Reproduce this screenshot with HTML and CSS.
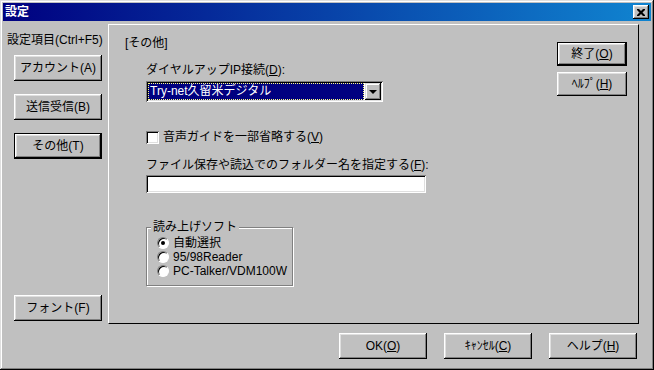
FILE: index.html
```html
<!DOCTYPE html>
<html lang="ja">
<head>
  <meta charset="UTF-8">
  <title>設定</title>
  <link rel="stylesheet" href="styles.css">
</head>
<body>

<div class="window">
  <div class="titlebar">
    <span class="title">設定</span>
    <button class="close-btn" aria-label="閉じる">
      <svg width="8" height="7" viewBox="0 0 8 7"><path d="M0 0h2l2 2 2-2h2v1l-2.5 2.5L8 6v1H6L4 5 2 7H0V6l2.5-2.5L0 1z" fill="#000"/></svg>
    </button>
  </div>

  <div class="main">
    <!-- left: category list -->
    <div class="sidebar">
      <div class="side-label">設定項目(Ctrl+F5)</div>
      <button class="btn side-btn">アカウント(A)</button>
      <button class="btn side-btn">送信受信(B)</button>
      <button class="btn side-btn default">その他(T)</button>
      <button class="btn side-btn font-btn">フォント(F)</button>
    </div>

    <!-- right: page -->
    <div class="panel">
      <div class="panel-body">
        <div class="section-title">[その他]</div>
        <div class="fields">
          <div class="field-label first">ダイヤルアップIP接続(<u>D</u>):</div>
          <div class="combo">
            <div class="combo-value"><span>Try-net久留米デジタル</span></div>
            <div class="combo-arrow"><i></i></div>
          </div>

          <label class="check-row">
            <span class="checkbox"></span>
            <span>音声ガイドを一部省略する(<u>V</u>)</span>
          </label>

          <div class="field-label">ファイル保存や読込でのフォルダー名を指定する(<u>F</u>):</div>
          <div class="textbox"></div>

          <fieldset class="group">
            <legend>読み上げソフト</legend>
            <label class="radio-row"><span class="radio checked"></span>自動選択</label>
            <label class="radio-row"><span class="radio"></span>95/98Reader</label>
            <label class="radio-row"><span class="radio"></span>PC-Talker/VDM100W</label>
          </fieldset>
        </div>
      </div>

      <div class="panel-actions">
        <button class="btn small-btn default">終了(<u>O</u>)</button>
        <button class="btn small-btn">ﾍﾙﾌﾟ(<u>H</u>)</button>
      </div>
    </div>
  </div>

  <div class="footer">
    <button class="btn foot-btn">OK(<u>O</u>)</button>
    <button class="btn foot-btn">ｷｬﾝｾﾙ(<u>C</u>)</button>
    <button class="btn foot-btn">ヘルプ(<u>H</u>)</button>
  </div>
</div>

</body>
</html>
```

FILE: styles.css
```css
* {
  box-sizing: border-box;
}

body {
  margin: 0;
  font-family: "Liberation Sans", "Noto Sans CJK JP", sans-serif;
  font-size: 12px;
  line-height: 14px;
  color: #000;
  background: #c0c0c0;
}

u {
  text-decoration: underline;
  text-underline-offset: 1px;
}

.window {
  width: 654px;
  height: 370px;
  padding: 3px;
  background: #c0c0c0;
  box-shadow: inset -1px -1px #000, inset 1px 1px #dfdfdf,
              inset -2px -2px #808080, inset 2px 2px #fff;
  display: flex;
  flex-direction: column;
}

.titlebar {
  height: 18px;
  display: flex;
  align-items: center;
  justify-content: space-between;
  padding: 0 2px 0 2px;
  background: linear-gradient(to right, #000080, #1084d0);
}

.title {
  color: #fff;
  font-weight: bold;
}

.close-btn {
  width: 16px;
  height: 14px;
  padding: 0;
  border: none;
  background: #c0c0c0;
  display: flex;
  align-items: center;
  justify-content: center;
  box-shadow: inset -1px -1px #000, inset 1px 1px #fff,
              inset -2px -2px #808080, inset 2px 2px #dfdfdf;
}

/* buttons */
.btn {
  font: inherit;
  color: #000;
  background: #c0c0c0;
  border: none;
  padding: 0;
  box-shadow: inset -1px -1px #000, inset 1px 1px #fff,
              inset -2px -2px #808080, inset 2px 2px #dfdfdf;
}

.btn.default {
  border: 1px solid #000;
}

.main {
  display: flex;
  padding-top: 3px;
}

.sidebar {
  width: 105px;
  height: 300px;
  display: flex;
  flex-direction: column;
  padding: 9px 0 3px 4px;
}

.side-label {
  margin-bottom: 8px;
}

.side-btn {
  width: 88px;
  height: 26px;
  margin: 0 0 13px 7px;
}

.font-btn {
  margin-top: auto;
  margin-bottom: 0;
}

.panel {
  width: 531px;
  height: 300px;
  display: flex;
  border-top: 1px solid #fff;
  border-left: 1px solid #fff;
  border-right: 1px solid #000;
  border-bottom: 1px solid #000;
  padding: 11px 11px 0 16px;
}

.panel-body {
  flex: 1;
}

.fields {
  margin-left: 21px;
}

.field-label {
  margin-top: 14px;
}

.field-label.first {
  margin-top: 13px;
}

.combo {
  width: 237px;
  height: 21px;
  margin-top: 4px;
  display: flex;
  padding: 2px;
  background: #fff;
  box-shadow: inset 1px 1px #808080, inset -1px -1px #fff,
              inset 2px 2px #000, inset -2px -2px #dfdfdf;
}

.combo-value {
  flex: 1;
  margin-right: 1px;
  background: #000080;
  color: #fff;
  border: 1px dotted #ffff80;
  line-height: 14px;
  padding-left: 1px;
}

.combo-arrow {
  width: 16px;
  height: 17px;
  background: #c0c0c0;
  display: flex;
  align-items: center;
  justify-content: center;
  box-shadow: inset -1px -1px #000, inset 1px 1px #dfdfdf,
              inset -2px -2px #808080, inset 2px 2px #fff;
}

.combo-arrow i {
  width: 0;
  height: 0;
  border-left: 4px solid transparent;
  border-right: 4px solid transparent;
  border-top: 4px solid #000;
  margin-top: 1px;
}

.check-row {
  display: flex;
  align-items: center;
  gap: 4px;
  margin-top: 28px;
  height: 14px;
}

.checkbox {
  width: 13px;
  height: 13px;
  background: #fff;
  box-shadow: inset 1px 1px #808080, inset -1px -1px #fff,
              inset 2px 2px #000, inset -2px -2px #dfdfdf;
}

.textbox {
  width: 280px;
  height: 18px;
  margin-top: 3px;
  background: #fff;
  box-shadow: inset 1px 1px #808080, inset -1px -1px #fff,
              inset 2px 2px #000, inset -2px -2px #dfdfdf;
}

.group {
  width: 147px;
  margin: 27px 0 0;
  padding: 0 0 7px 4px;
  border: 1px solid #808080;
  box-shadow: inset 1px 1px #fff, 1px 1px #fff;
}

.group legend {
  padding: 0 2px;
  background: #c0c0c0;
  line-height: 14px;
}

.radio-row {
  display: flex;
  align-items: center;
  height: 14px;
  line-height: 14px;
  gap: 4px;
  margin-left: 6px;
}

.radio-row:first-of-type {
  margin-top: 2px;
}

.radio {
  position: relative;
  flex: none;
  width: 12px;
  height: 12px;
  border-radius: 50%;
  background: #fff;
  border: 1px solid;
  border-color: #808080 #fff #fff #808080;
  box-shadow: inset 1px 1px #000;
}

.radio.checked::after {
  content: "";
  position: absolute;
  left: 3px;
  top: 3px;
  width: 4px;
  height: 4px;
  border-radius: 50%;
  background: #000;
}

.panel-actions {
  display: flex;
  flex-direction: column;
  gap: 6px;
  margin-top: 6px;
}

.small-btn {
  width: 70px;
  height: 24px;
}

.footer {
  display: flex;
  justify-content: flex-end;
  gap: 17px;
  margin-top: 9px;
  padding-right: 14px;
}

.foot-btn {
  width: 88px;
  height: 26px;
}
```
